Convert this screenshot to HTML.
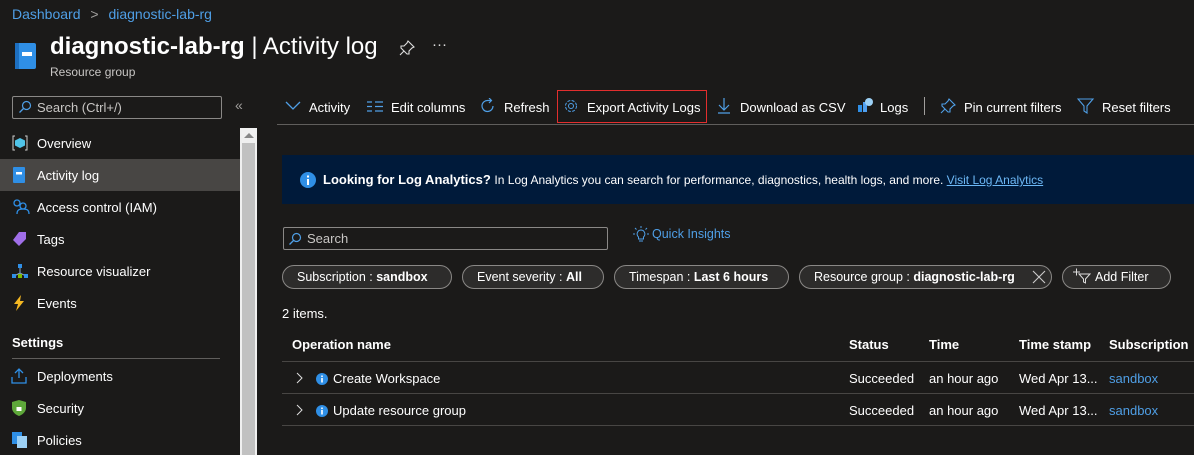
<!DOCTYPE html>
<html><head><meta charset="utf-8"><style>
*{margin:0;padding:0;box-sizing:border-box}
body{width:1194px;height:455px;background:#1b1a19;color:#fff;font-family:"Liberation Sans",sans-serif;font-size:13px;position:relative;overflow:hidden}
.a{position:absolute;white-space:nowrap}
.lnk{color:#4f9fe6}
.pill{position:absolute;top:265px;height:24px;border:1px solid #8a8886;border-radius:12px;background:#2d2c2b;font-size:12.5px;line-height:22px;padding:0 0 0 14px;color:#fff;white-space:nowrap;overflow:hidden}
.pill b{font-weight:bold}
.hl{position:absolute;left:282px;width:912px;height:1px;background:#484644}
.th{font-weight:bold}
svg{position:absolute}
</style></head><body>
<div class="a lnk" style="left:12px;top:6px;font-size:14px">Dashboard <span style="color:#a19f9d;margin:0 6px">&gt;</span> diagnostic-lab-rg</div>
<svg style="left:14px;top:42px" width="24" height="28" viewBox="0 0 24 28"><rect x="1" y="1" width="21" height="26" rx="2" fill="#2f8fe6"/><rect x="1" y="1" width="4" height="26" fill="#1d6fc0"/><rect x="8" y="10" width="10" height="4" fill="#fff"/></svg>
<div class="a" style="left:50px;top:33px;font-size:24px"><b>diagnostic-lab-rg</b> | Activity log</div>
<svg style="left:399px;top:40px" width="16" height="16"><path d="M9 1l6 6-2 1-3 3 0 3-2 0-6-6 0-2 3 0 3-3z M5 11l-4 4" stroke="#ddd" fill="none" stroke-width="1.1"/></svg>
<div class="a" style="left:432px;top:36px;font-size:15px;color:#ddd">···</div>
<div class="a" style="left:50px;top:65px;font-size:12px;color:#c8c6c4">Resource group</div>

<div class="a" style="left:12px;top:96px;width:210px;height:23px;border:1px solid #8a8886;border-radius:2px"></div>
<svg style="left:18px;top:100px" width="14" height="14" viewBox="0 0 14 14"><circle cx="8.5" cy="5.5" r="4" fill="none" stroke="#4f9fe6" stroke-width="1.2"/><line x1="5.5" y1="8.5" x2="1.5" y2="12.5" stroke="#4f9fe6" stroke-width="1.3"/></svg>
<div class="a" style="left:37px;top:100px;color:#c8c6c4">Search (Ctrl+/)</div>
<div class="a" style="left:235px;top:97px;color:#a19f9d;font-size:14px">«</div>

<div class="a" style="left:0;top:159px;width:240px;height:32px;background:#484644"></div>
<div class="a" style="left:240px;top:128px;width:17px;height:327px;background:#f0f0f0"></div>
<div class="a" style="left:242px;top:143px;width:13px;height:312px;background:#c1c1c1"></div>
<div class="a" style="left:244px;top:133px;width:0;height:0;border-left:5px solid transparent;border-right:5px solid transparent;border-bottom:5px solid #888"></div>

<svg style="left:12px;top:135px" width="16" height="16"><path d="M3 1H1v14h2M13 1h2v14h-2" stroke="#ccc" fill="none"/><path d="M8 3l5 2.5v5L8 13l-5-2.5v-5z" fill="#50c4e8"/></svg>
<div class="a" style="left:37px;top:136px">Overview</div>
<svg style="left:13px;top:167px" width="12" height="16"><rect width="12" height="16" rx="1" fill="#2f8fe6"/><rect x="3" y="5" width="6" height="2.5" fill="#fff"/></svg>
<div class="a" style="left:37px;top:168px">Activity log</div>
<svg style="left:12px;top:199px" width="18" height="16"><circle cx="5" cy="4" r="3" fill="none" stroke="#2f8fe6" stroke-width="1.3"/><circle cx="11" cy="7" r="3" fill="none" stroke="#2f8fe6" stroke-width="1.3"/><path d="M5 15c0-4 2-5 6-5s6 1 6 5" fill="none" stroke="#2f8fe6" stroke-width="1.3"/></svg>
<div class="a" style="left:37px;top:200px">Access control (IAM)</div>
<svg style="left:12px;top:231px" width="16" height="16"><path d="M7 1h7v7l-7 7-6-6z" fill="#a06ee8"/></svg>
<div class="a" style="left:37px;top:232px">Tags</div>
<svg style="left:11px;top:263px" width="18" height="16"><rect x="7" y="1" width="4" height="4" fill="#2f8fe6"/><path d="M9 5v5M3 13l6-3 6 3" stroke="#8ac" fill="none"/><rect x="1" y="11" width="4" height="4" fill="#2f8fe6"/><rect x="13" y="11" width="4" height="4" fill="#2f8fe6"/><rect x="7" y="11" width="4" height="4" fill="#7fba00"/></svg>
<div class="a" style="left:37px;top:264px">Resource visualizer</div>
<svg style="left:12px;top:295px" width="14" height="16"><path d="M9 0L2 9h4l-2 7 8-10H8z" fill="#f5b822"/></svg>
<div class="a" style="left:37px;top:296px">Events</div>
<div class="a" style="left:12px;top:335px;font-weight:bold">Settings</div>
<div class="a" style="left:12px;top:358px;width:208px;height:1px;background:#605e5c"></div>
<svg style="left:11px;top:367px" width="16" height="17"><path d="M8 11V2M4 6l4-4 4 4M1 10v6h14v-6" stroke="#2f8fe6" fill="none" stroke-width="1.3"/></svg>
<div class="a" style="left:37px;top:369px">Deployments</div>
<svg style="left:12px;top:400px" width="14" height="16"><path d="M7 0l7 2v6c0 4-4 7-7 8-3-1-7-4-7-8V2z" fill="#5ea83a"/><rect x="4.5" y="7" width="5" height="4" fill="#fff"/></svg>
<div class="a" style="left:37px;top:401px">Security</div>
<svg style="left:12px;top:432px" width="16" height="16"><rect x="0" y="0" width="10" height="12" fill="#2f8fe6"/><rect x="5" y="4" width="10" height="12" fill="#9cd0f5"/></svg>
<div class="a" style="left:37px;top:433px">Policies</div>

<!-- toolbar -->
<svg style="left:285px;top:101px" width="16" height="10"><path d="M1 1l7 7 7-7" stroke="#4f9fe6" fill="none" stroke-width="1.3"/></svg>
<div class="a" style="left:309px;top:100px">Activity</div>
<svg style="left:367px;top:101px" width="16" height="12"><path d="M0 1h5M0 5.5h5M0 10h5M8 1h8M8 5.5h8M8 10h8" stroke="#4f9fe6" stroke-width="1.3"/></svg>
<div class="a" style="left:391px;top:100px">Edit columns</div>
<svg style="left:480px;top:98px" width="16" height="16"><path d="M13 8A5.5 5.5 0 1 1 8 2.5h3M9 0l2.5 2.5L9 5" stroke="#4f9fe6" fill="none" stroke-width="1.2"/></svg>
<div class="a" style="left:504px;top:100px">Refresh</div>
<div class="a" style="left:557px;top:90px;width:150px;height:33px;border:1px solid #e22e2e"></div>
<svg style="left:563px;top:98px" width="16" height="16"><circle cx="8" cy="8" r="2.5" fill="none" stroke="#4f9fe6"/><circle cx="8" cy="8" r="5.5" fill="none" stroke="#4f9fe6" stroke-dasharray="3 1.4"/></svg>
<div class="a" style="left:587px;top:100px">Export Activity Logs</div>
<svg style="left:717px;top:97px" width="14" height="17"><path d="M7 1v12M2 8l5 5 5-5M1 16h12" stroke="#4f9fe6" fill="none" stroke-width="1.2"/></svg>
<div class="a" style="left:740px;top:100px">Download as CSV</div>
<svg style="left:857px;top:97px" width="16" height="16"><rect x="1" y="8" width="4" height="7" fill="#2f8fe6"/><rect x="6" y="5" width="4" height="10" fill="#50a0f0"/><circle cx="12" cy="5" r="4" fill="#9cd0f5"/></svg>
<div class="a" style="left:880px;top:100px">Logs</div>
<div class="a" style="left:924px;top:97px;width:1px;height:18px;background:#a19f9d"></div>
<svg style="left:940px;top:98px" width="16" height="16"><path d="M9 1l6 6-2 1-3 3 0 3-2 0-6-6 0-2 3 0 3-3z M5 11l-4 4" stroke="#4f9fe6" fill="none" stroke-width="1.1"/></svg>
<div class="a" style="left:964px;top:100px">Pin current filters</div>
<svg style="left:1077px;top:98px" width="18" height="16"><path d="M1 1h15l-6 7v7l-3-2V8z" stroke="#4f9fe6" fill="none" stroke-width="1.1"/></svg>
<div class="a" style="left:1102px;top:100px">Reset filters</div>
<div class="a" style="left:277px;top:124px;width:917px;height:1px;background:#605e5c"></div>

<!-- banner -->
<div class="a" style="left:282px;top:155px;width:912px;height:49px;background:#001a3a"></div>
<svg style="left:300px;top:172px" width="16" height="16"><circle cx="8" cy="8" r="8" fill="#2f8fe6"/><rect x="7" y="7" width="2" height="6" fill="#fff"/><rect x="7" y="3.5" width="2" height="2" fill="#fff"/></svg>
<div class="a" style="left:323px;top:172px;font-size:13px"><b>Looking for Log Analytics?</b> <span style="font-size:12px">In Log Analytics you can search for performance, diagnostics, health logs, and more. <u class="lnk" style="color:#6cb8f6">Visit Log Analytics</u></span></div>

<div class="a" style="left:283px;top:227px;width:325px;height:23px;border:1px solid #8a8886;border-radius:2px"></div>
<svg style="left:288px;top:232px" width="14" height="14" viewBox="0 0 14 14"><circle cx="8.5" cy="5.5" r="4" fill="none" stroke="#4f9fe6" stroke-width="1.2"/><line x1="5.5" y1="8.5" x2="1.5" y2="12.5" stroke="#4f9fe6" stroke-width="1.3"/></svg>
<div class="a" style="left:307px;top:231px;color:#c8c6c4">Search</div>
<svg style="left:632px;top:225px" width="18" height="18"><path d="M9 5a4 4 0 0 0-2.5 7v2h5v-2A4 4 0 0 0 9 5zM7 16h4M9 1v2M3 3l1.5 1.5M15 3l-1.5 1.5M1 9h2M15 9h2" stroke="#4f9fe6" fill="none"/></svg>
<div class="a lnk" style="left:652px;top:227px;font-size:12.5px">Quick Insights</div>

<div class="pill" style="left:282px;width:170px">Subscription : <b>sandbox</b></div>
<div class="pill" style="left:462px;width:142px">Event severity : <b>All</b></div>
<div class="pill" style="left:614px;width:175px">Timespan : <b>Last 6 hours</b></div>
<div class="pill" style="left:799px;width:253px">Resource group : <b>diagnostic-lab-rg</b></div>
<svg style="left:1032px;top:270px" width="14" height="14"><path d="M1 1l12 12M13 1L1 13" stroke="#ccc" stroke-width="1.1"/></svg>
<div class="pill" style="left:1062px;width:109px;padding-left:32px">Add Filter</div>
<svg style="left:1072px;top:268px" width="20" height="16"><path d="M1 4h7M4.5 0.5v7M7 6h11l-4.5 5v4l-2-1v-3z" stroke="#ddd" fill="none"/></svg>

<div class="a" style="left:282px;top:306px">2 items.</div>
<div class="a th" style="left:292px;top:337px">Operation name</div>
<div class="a th" style="left:849px;top:337px">Status</div>
<div class="a th" style="left:929px;top:337px">Time</div>
<div class="a th" style="left:1019px;top:337px">Time stamp</div>
<div class="a th" style="left:1109px;top:337px">Subscription</div>
<div class="hl" style="top:361px"></div>
<div class="hl" style="top:393px"></div>
<div class="hl" style="top:425px"></div>
<svg style="left:296px;top:372px" width="8" height="12"><path d="M1 1l5 5-5 5" stroke="#ddd" fill="none"/></svg>
<svg style="left:296px;top:404px" width="8" height="12"><path d="M1 1l5 5-5 5" stroke="#ddd" fill="none"/></svg>
<svg style="left:316px;top:373px" width="12" height="12"><circle cx="6" cy="6" r="6" fill="#2f8fe6"/><rect x="5.2" y="5" width="1.6" height="4.5" fill="#fff"/><rect x="5.2" y="2.5" width="1.6" height="1.6" fill="#fff"/></svg>
<svg style="left:316px;top:405px" width="12" height="12"><circle cx="6" cy="6" r="6" fill="#2f8fe6"/><rect x="5.2" y="5" width="1.6" height="4.5" fill="#fff"/><rect x="5.2" y="2.5" width="1.6" height="1.6" fill="#fff"/></svg>
<div class="a" style="left:333px;top:371px">Create Workspace</div>
<div class="a" style="left:333px;top:403px">Update resource group</div>
<div class="a" style="left:849px;top:371px">Succeeded</div>
<div class="a" style="left:849px;top:403px">Succeeded</div>
<div class="a" style="left:929px;top:371px">an hour ago</div>
<div class="a" style="left:929px;top:403px">an hour ago</div>
<div class="a" style="left:1019px;top:371px">Wed Apr 13...</div>
<div class="a" style="left:1019px;top:403px">Wed Apr 13...</div>
<div class="a lnk" style="left:1109px;top:371px">sandbox</div>
<div class="a lnk" style="left:1109px;top:403px">sandbox</div>
</body></html>
